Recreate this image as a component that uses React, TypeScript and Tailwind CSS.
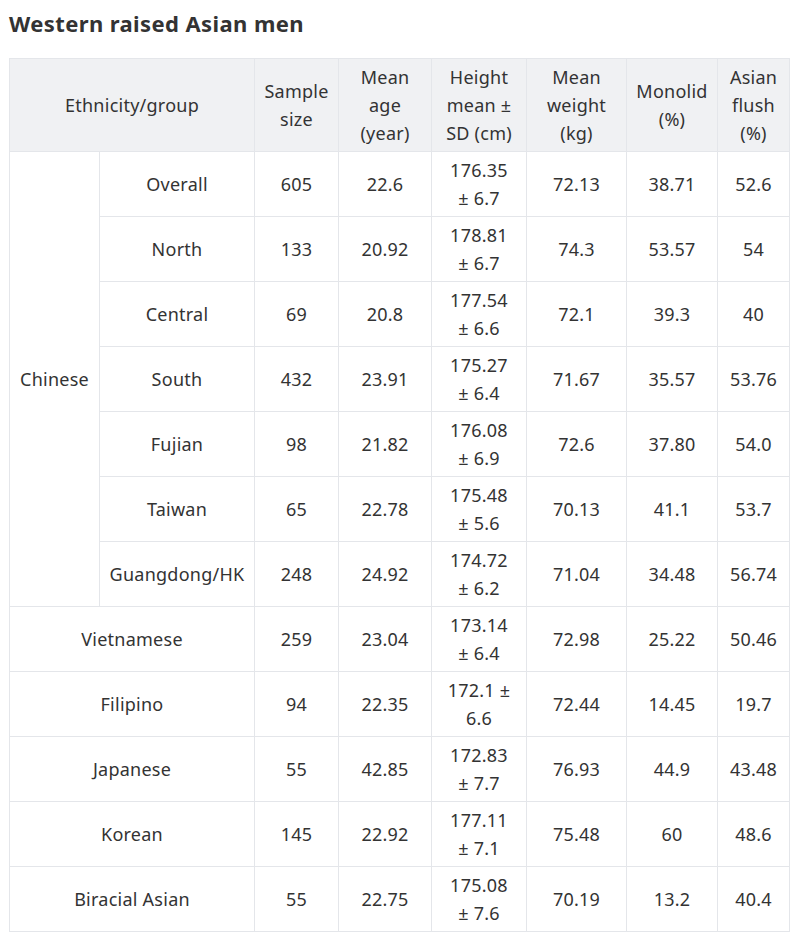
type Row = {
  group: string;
  size: string;
  age: string;
  height: [string, string];
  weight: string;
  monolid: string;
  flush: string;
};

const chinese: Row[] = [
  { group: "Overall", size: "605", age: "22.6", height: ["176.35", "± 6.7"], weight: "72.13", monolid: "38.71", flush: "52.6" },
  { group: "North", size: "133", age: "20.92", height: ["178.81", "± 6.7"], weight: "74.3", monolid: "53.57", flush: "54" },
  { group: "Central", size: "69", age: "20.8", height: ["177.54", "± 6.6"], weight: "72.1", monolid: "39.3", flush: "40" },
  { group: "South", size: "432", age: "23.91", height: ["175.27", "± 6.4"], weight: "71.67", monolid: "35.57", flush: "53.76" },
  { group: "Fujian", size: "98", age: "21.82", height: ["176.08", "± 6.9"], weight: "72.6", monolid: "37.80", flush: "54.0" },
  { group: "Taiwan", size: "65", age: "22.78", height: ["175.48", "± 5.6"], weight: "70.13", monolid: "41.1", flush: "53.7" },
  { group: "Guangdong/HK", size: "248", age: "24.92", height: ["174.72", "± 6.2"], weight: "71.04", monolid: "34.48", flush: "56.74" },
];

const others: Row[] = [
  { group: "Vietnamese", size: "259", age: "23.04", height: ["173.14", "± 6.4"], weight: "72.98", monolid: "25.22", flush: "50.46" },
  { group: "Filipino", size: "94", age: "22.35", height: ["172.1 ±", "6.6"], weight: "72.44", monolid: "14.45", flush: "19.7" },
  { group: "Japanese", size: "55", age: "42.85", height: ["172.83", "± 7.7"], weight: "76.93", monolid: "44.9", flush: "43.48" },
  { group: "Korean", size: "145", age: "22.92", height: ["177.11", "± 7.1"], weight: "75.48", monolid: "60", flush: "48.6" },
  { group: "Biracial Asian", size: "55", age: "22.75", height: ["175.08", "± 7.6"], weight: "70.19", monolid: "13.2", flush: "40.4" },
];

const cell = "border border-[#e4e6ea] px-1 py-[4px] text-center align-middle";

function DataCells({ row }: { row: Row }) {
  return (
    <>
      <td className={cell}>{row.size}</td>
      <td className={cell}>{row.age}</td>
      <td className={cell}>
        {row.height[0]}
        <br />
        {row.height[1]}
      </td>
      <td className={cell}>{row.weight}</td>
      <td className={cell}>{row.monolid}</td>
      <td className={cell}>{row.flush}</td>
    </>
  );
}

export default function App() {
  return (
    <div className="bg-white px-[9px] pt-[9px] text-[#333] [font-family:'Noto_Sans',sans-serif]">
      <h2 className="text-[22px] leading-[28px] font-bold tracking-[0.4px] text-[#333]">Western raised Asian men</h2>
      <table className="mt-[21px] w-[780px] table-fixed border-collapse text-[18px] leading-[28px] tracking-[0.25px]">
        <colgroup>
          <col className="w-[90px]" />
          <col className="w-[155px]" />
          <col className="w-[84px]" />
          <col className="w-[93px]" />
          <col className="w-[95px]" />
          <col className="w-[100px]" />
          <col className="w-[91px]" />
          <col className="w-[72px]" />
        </colgroup>
        <thead>
          <tr className="h-[93px] bg-[#f0f1f3]">
            <th colSpan={2} className={`${cell} font-normal`}>Ethnicity/group</th>
            <th className={`${cell} font-normal`}>Sample<br />size</th>
            <th className={`${cell} font-normal`}>Mean<br />age<br />(year)</th>
            <th className={`${cell} font-normal`}>Height<br />mean ±<br />SD (cm)</th>
            <th className={`${cell} font-normal`}>Mean<br />weight<br />(kg)</th>
            <th className={`${cell} font-normal`}>Monolid<br />(%)</th>
            <th className={`${cell} font-normal`}>Asian<br />flush<br />(%)</th>
          </tr>
        </thead>
        <tbody>
          {chinese.map((row, i) => (
            <tr key={row.group} className="h-[65px]">
              {i === 0 && (
                <td rowSpan={chinese.length} className={cell}>
                  Chinese
                </td>
              )}
              <td className={cell}>{row.group}</td>
              <DataCells row={row} />
            </tr>
          ))}
          {others.map((row) => (
            <tr key={row.group} className="h-[65px]">
              <td colSpan={2} className={cell}>
                {row.group}
              </td>
              <DataCells row={row} />
            </tr>
          ))}
        </tbody>
      </table>
    </div>
  );
}
